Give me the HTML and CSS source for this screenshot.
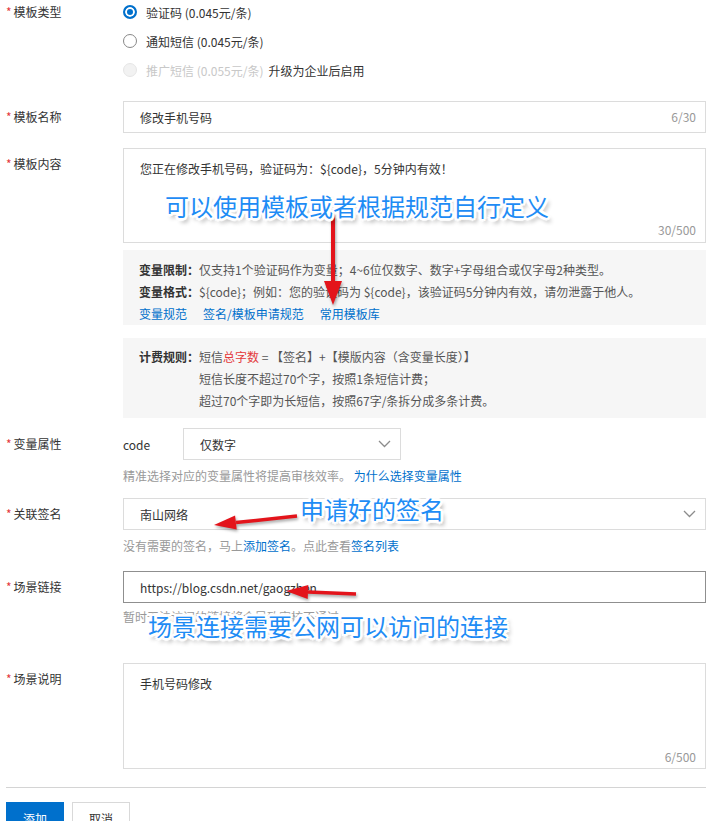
FILE: index.html
```html
<!DOCTYPE html>
<html lang="zh-CN">
<head>
  <meta charset="UTF-8" />
  <meta name="viewport" content="width=device-width, initial-scale=1.0"/>
  <title>添加模板</title>
  <link rel="stylesheet" href="styles.css">
</head>
<body>

<div class="page">
  <div class="form-item item-type">
    <div class="form-label label-radio"><i>*</i>模板类型</div>
    <div class="form-control">
      <div class="radio-group">
        <label class="radio checked"><span class="radio-dot"></span>验证码 (0.045元/条)</label>
        <label class="radio"><span class="radio-dot"></span>通知短信 (0.045元/条)</label>
        <label class="radio disabled"><span class="radio-dot"></span><span class="muted">推广短信 (0.055元/条)</span>升级为企业后启用</label>
      </div>
    </div>
  </div>

  <div class="form-item item-name">
    <div class="form-label"><i>*</i>模板名称</div>
    <div class="form-control">
      <div class="input">
        <span class="input-text">修改手机号码</span>
        <span class="counter">6/30</span>
      </div>
    </div>
  </div>

  <div class="form-item item-content">
    <div class="form-label"><i>*</i>模板内容</div>
    <div class="form-control">
      <div class="textarea tall-1">
        <div class="textarea-text">您正在修改手机号码，验证码为：${code}，5分钟内有效！</div>
        <div class="counter">30/500</div>
      </div>
      <div class="tips tips-vars">
        <p><b>变量限制：</b>仅支持1个验证码作为变量；4~6位仅数字、数字+字母组合或仅字母2种类型。</p>
        <p><b>变量格式：</b>${code}；例如：您的验证码为 ${code}，该验证码5分钟内有效，请勿泄露于他人。</p>
        <p class="tips-links"><a>变量规范</a><a>签名/模板申请规范</a><a>常用模板库</a></p>
      </div>
      <div class="tips tips-fee">
        <b>计费规则：</b>
        <div class="fee-lines">
          <p>短信<span class="red">总字数</span> = 【签名】+【模版内容（含变量长度）】</p>
          <p>短信长度不超过70个字，按照1条短信计费；</p>
          <p>超过70个字即为长短信，按照67字/条拆分成多条计费。</p>
        </div>
      </div>
    </div>
  </div>

  <div class="form-item item-var">
    <div class="form-label"><i>*</i>变量属性</div>
    <div class="form-control">
      <div class="var-row">
        <span class="var-name">code</span>
        <div class="select select-small">
          <span class="input-text">仅数字</span>
          <svg class="chevron" width="13" height="8" viewBox="0 0 13 8"><path d="M1 1 L6.5 6.5 L12 1" fill="none" stroke="#8c8c8c" stroke-width="1.3"/></svg>
        </div>
      </div>
      <div class="hint">精准选择对应的变量属性将提高审核效率。 <a>为什么选择变量属性</a></div>
    </div>
  </div>

  <div class="form-item item-sign">
    <div class="form-label"><i>*</i>关联签名</div>
    <div class="form-control">
      <div class="select">
        <span class="input-text">南山网络</span>
        <svg class="chevron" width="13" height="8" viewBox="0 0 13 8"><path d="M1 1 L6.5 6.5 L12 1" fill="none" stroke="#8c8c8c" stroke-width="1.3"/></svg>
      </div>
      <div class="hint">没有需要的签名，马上<a>添加签名</a>。点此查看<a>签名列表</a></div>
    </div>
  </div>

  <div class="form-item item-link">
    <div class="form-label"><i>*</i>场景链接</div>
    <div class="form-control">
      <div class="input input-active">
        <span class="input-text">https://blog.csdn.net/gaogzhen</span>
      </div>
      <div class="hint hint-tight">暂时无法访问的链接将会导致审核不通过</div>
    </div>
  </div>

  <div class="form-item item-desc">
    <div class="form-label"><i>*</i>场景说明</div>
    <div class="form-control">
      <div class="textarea tall-2">
        <div class="textarea-text">手机号码修改</div>
        <div class="counter">6/500</div>
      </div>
    </div>
  </div>

  <div class="divider"></div>

  <div class="actions">
    <button class="btn btn-primary">添加</button>
    <button class="btn">取消</button>
  </div>

  <!-- screenshot annotations -->
  <div class="notes">
    <svg class="arrows" width="706" height="821" viewBox="0 0 706 821">
      <g fill="#e3141b" stroke="#e3141b">
        <line x1="333" y1="212" x2="333" y2="284" stroke-width="4"/>
        <polygon points="324,281 342,281 333,305" stroke="none"/>
        <line x1="297" y1="516" x2="236" y2="522.6" stroke-width="3.5"/>
        <polygon points="236.7,529.6 235.1,515.6 214,525" stroke="none"/>
        <line x1="356" y1="594" x2="308" y2="592" stroke-width="3.5"/>
        <polygon points="308.3,585 307.7,599 286,591" stroke="none"/>
      </g>
    </svg>
    <div class="note note-1">可以使用模板或者根据规范自行定义</div>
    <div class="note note-2">申请好的签名</div>
    <div class="note note-3">场景连接需要公网可以访问的连接</div>
  </div>
</div>

</body>
</html>
```

FILE: styles.css
```css
body {
  margin: 0;
  padding: 0;
  background: #fff;
  color: #333;
  font-family: "Noto Sans CJK SC", "Noto Sans", sans-serif;
  font-size: 12px;
}

p {
  margin: 0;
}

a {
  color: #0070cc;
  cursor: pointer;
}

.page {
  position: relative;
  width: 706px;
  height: 821px;
  overflow: hidden;
  padding-left: 6px;
  box-sizing: border-box;
}

.form-item {
  display: flex;
}

.form-label {
  width: 117px;
  flex: none;
  line-height: 32px;
  color: #333;
}

.form-label i {
  font-style: normal;
  color: #e4393c;
  margin-right: 2px;
}

.label-radio {
  line-height: 24px;
}

.form-control {
  flex: 1;
  min-width: 0;
}

.item-type { margin-bottom: 19px; }
.item-name { margin-bottom: 15px; }
.item-content { margin-bottom: 10px; }
.item-var { margin-bottom: 12px; }
.item-sign { margin-bottom: 15px; }
.item-link { margin-bottom: 36px; }

/* radios */
.radio-group {
  display: flex;
  flex-direction: column;
  gap: 5px;
}

.radio {
  display: flex;
  align-items: center;
  height: 24px;
  color: #333;
}

.radio-dot {
  width: 14px;
  height: 14px;
  border: 1px solid #888;
  border-radius: 50%;
  box-sizing: border-box;
  margin-right: 9px;
  flex: none;
}

.radio.checked .radio-dot {
  border: 2px solid #0070cc;
  box-shadow: inset 0 0 0 2px #fff;
  background: #0070cc;
}

.radio.disabled .radio-dot {
  border-color: #e6e6e6;
  background: #f2f2f2;
}

.muted {
  color: #c8c8c8;
  margin-right: 5px;
}

/* inputs */
.input,
.select {
  display: flex;
  align-items: center;
  height: 32px;
  border: 1px solid #dcdcdc;
  box-sizing: border-box;
  padding: 0 9px 0 16px;
  background: #fff;
}

.input-active {
  border-color: #8f8f8f;
}

.input-text {
  flex: 1;
  white-space: nowrap;
}

.counter {
  color: #999;
  line-height: 16px;
}

.textarea {
  display: flex;
  flex-direction: column;
  border: 1px solid #dcdcdc;
  box-sizing: border-box;
  padding: 12px 9px 4px 16px;
}

.textarea .counter {
  align-self: flex-end;
}

.textarea-text {
  flex: 1;
  line-height: 16px;
}

.tall-1 { height: 95px; }
.tall-2 { height: 106px; padding-bottom: 3px; }

/* tip boxes */
.tips {
  background: #f6f6f6;
  padding: 9px 16px 0;
  line-height: 22px;
  color: #555;
}

.tips b {
  color: #333;
}

.tips-vars {
  margin-top: 7px;
  height: 75px;
  box-sizing: border-box;
}

.tips-links {
  display: flex;
  gap: 16px;
}

.tips-fee {
  margin-top: 13px;
  height: 80px;
  box-sizing: border-box;
  padding-top: 8px;
  display: flex;
}

.red {
  color: #e4393c;
}

/* variable row */
.var-row {
  display: flex;
  align-items: center;
}

.var-name {
  width: 60px;
  flex: none;
}

.select-small {
  width: 218px;
  padding-right: 9px;
}

.chevron {
  flex: none;
}

.hint {
  margin-top: 6px;
  line-height: 20px;
  color: #999;
  white-space: nowrap;
}

.hint-tight {
  margin-top: 4px;
}

.divider {
  margin-top: 18px;
  height: 1px;
  background: #d4d4d4;
}

.actions {
  display: flex;
  gap: 8px;
  margin-top: 14px;
}

.btn {
  width: 58px;
  height: 32px;
  border: 1px solid #d9d9d9;
  background: #fff;
  color: #333;
  font-family: inherit;
  font-size: 12px;
  padding: 0;
}

.btn-primary {
  background: #0070cc;
  border-color: #0070cc;
  color: #fff;
}

/* annotations drawn on the screenshot */
.notes {
  position: absolute;
  left: 0;
  top: 0;
  width: 706px;
  height: 821px;
  pointer-events: none;
}

.arrows {
  position: absolute;
  left: 0;
  top: 0;
  filter: drop-shadow(1px 2px 1.5px rgba(0,0,0,0.35));
}

.note {
  position: absolute;
  font-size: 24px;
  line-height: 30px;
  color: #1e8cf5;
  white-space: nowrap;
  text-shadow:
    1px 1px 0 #fff, -1px -1px 0 #fff, 1px -1px 0 #fff, -1px 1px 0 #fff,
    2px 0 0 #fff, -2px 0 0 #fff, 0 2px 0 #fff, 0 -2px 0 #fff,
    2px 2px 0 #fff, -2px -2px 0 #fff, 2px -2px 0 #fff, -2px 2px 0 #fff,
    0 -3px 1px #fff, 0 3px 1px #fff, 3px 0 1px #fff, -3px 0 1px #fff,
    3px 4px 4px rgba(0,0,0,0.45);
}

.note-1 { left: 165px; top: 191px; }
.note-2 { left: 300px; top: 494px; }
.note-3 { left: 148px; top: 611px; }
```
